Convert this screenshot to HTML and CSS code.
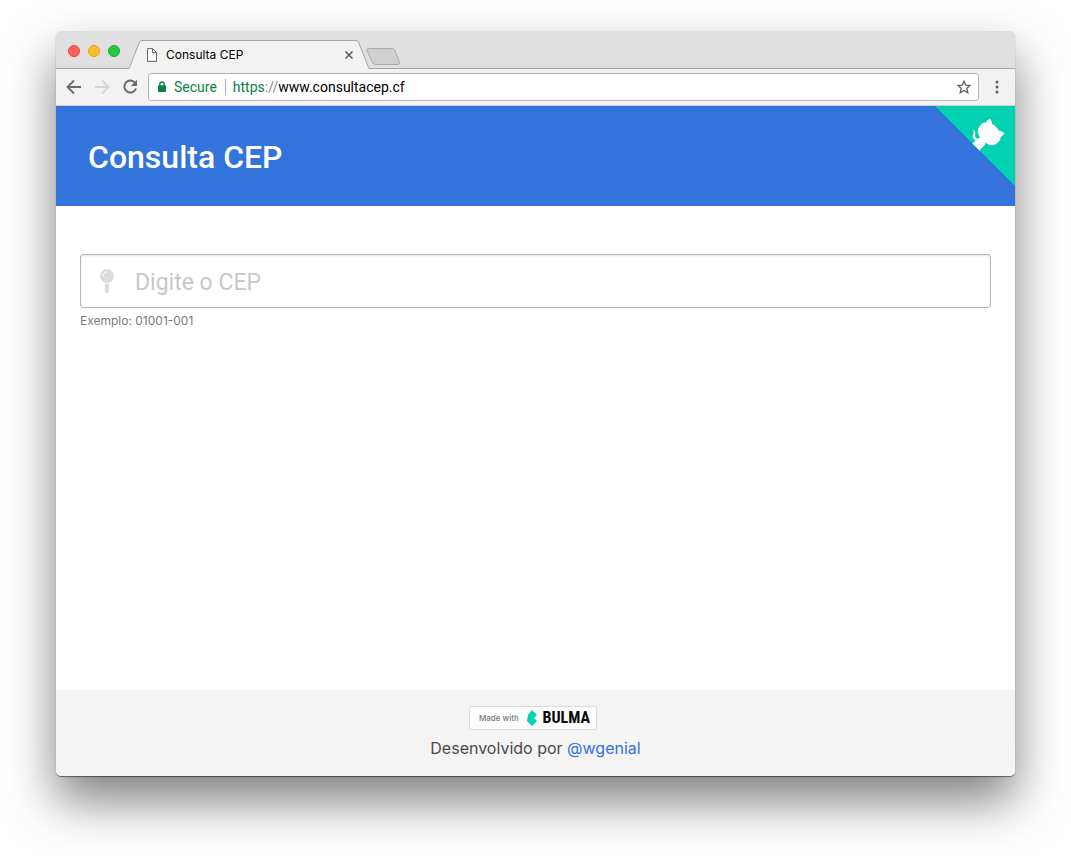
FILE: index.html
```html
<!DOCTYPE html>
<html lang="pt-BR">
<head>
<meta charset="utf-8">
<title>Consulta CEP</title>
<link rel="stylesheet" href="styles.css">
</head>
<body>
<div class="window">
  <div class="tabstrip">
    <div class="lights">
      <button class="light close" aria-label="Fechar"></button>
      <button class="light minimize" aria-label="Minimizar"></button>
      <button class="light maximize" aria-label="Maximizar"></button>
    </div>
    <div class="tab">
      <svg class="tab-shape" viewBox="0 0 242 29" preserveAspectRatio="none" aria-hidden="true"><path d="M0 28.500L1 28.500L11.500 2Q12.200.500 14 .500H228Q229.800.500 230.500 2L241 28.500H242V29H0Z" fill="#f2f2f2"/><path d="M0 28.500L1 28.500L11.500 2Q12.200.500 14 .500H228Q229.800.500 230.500 2L241 28.500H242" fill="none" stroke="#a3a3a3"/></svg>
      <svg class="page-icon" viewBox="0 0 12 14" aria-hidden="true"><path d="M1.500.600H6.500L10.500 4.600V13.400H1.500ZM6.500.600V4.600H10.500" fill="#fafafa" stroke="#666"/></svg>
      <span class="tab-title">Consulta CEP</span>
      <button class="tab-close" aria-label="Fechar aba"><svg viewBox="0 0 8 8"><path d="M.500.500L7.500 7.500M7.500.500L.500 7.500" stroke="#5a5a5a" stroke-width="1.500"/></svg></button>
    </div>
    <button class="new-tab" aria-label="Nova aba"><svg viewBox="0 0 34 17"><path d="M3 .500H26Q28 .500 28.700 2L33.300 14Q34 16.500 32 16.500H9.500Q7.500 16.500 6.800 15L1 2.500Q.500.500 3 .500Z" fill="#d0d0d0" stroke="#a9a9a9"/></svg></button>
  </div>
  <div class="toolbar">
    <button class="nav" aria-label="Voltar"><svg viewBox="0 0 16 16"><path d="M15 8H2M8 1.500L1.500 8L8 14.500" fill="none" stroke="#6a6a6a" stroke-width="1.800"/></svg></button>
    <button class="nav" aria-label="Avançar"><svg viewBox="0 0 16 16"><path d="M1 8H14M8 1.500L14.500 8L8 14.500" fill="none" stroke="#d6d6d6" stroke-width="1.800"/></svg></button>
    <button class="nav" aria-label="Recarregar"><svg viewBox="0 0 16 16"><path d="M13.300 4.200A6 6 0 1 0 14 9.500" fill="none" stroke="#6a6a6a" stroke-width="2"/><path d="M15 .800V7H8.800Z" fill="#6a6a6a"/></svg></button>
    <div class="address">
      <svg class="lock" viewBox="0 0 8 11" aria-hidden="true"><path d="M1.800 5V3.200A2.200 2.200 0 0 1 6.200 3.200V5" fill="none" stroke="#0b8043" stroke-width="1.300"/><rect y="4.200" width="8" height="6.800" rx=".8" fill="#0b8043"/></svg>
      <span class="secure">Secure</span>
      <span class="url"><span class="scheme">https</span><span class="slashes">://</span>www.consultacep.cf</span>
      <button class="star" aria-label="Favorito"><svg viewBox="0 0 14 14"><path d="M7 1.200L8.700 5.100L13 5.500L9.800 8.300L10.800 12.700L7 10.400L3.200 12.700L4.200 8.300L1 5.500L5.300 5.100Z" fill="none" stroke="#5f5f5f" stroke-width="1.300"/></svg></button>
    </div>
    <button class="menu" aria-label="Menu"><svg viewBox="0 0 4 14"><g fill="#5f5f5f"><circle cx="2" cy="2" r="1.500"/><circle cx="2" cy="7" r="1.500"/><circle cx="2" cy="12" r="1.500"/></g></svg></button>
  </div>
  <header class="hero">
    <h1 class="title">Consulta CEP</h1>
    <a class="corner" href="#" aria-label="GitHub"><svg viewBox="0 0 250 250"><path d="M0 0L250 250V0Z" fill="#00d1b2"/><path d="M128.300 109C113.800 99.700 119 89.600 119 89.600C122 82.700 120.500 78.600 120.500 78.600C119.200 72 123.400 76.300 123.400 76.300C127.300 80.900 125.500 87.300 125.500 87.300C122.900 97.600 130.600 101.900 134.400 103.200" fill="#fff"/><path d="M115 115C114.900 115.100 118.700 116.500 119.800 115.400L133.700 101.600C136.900 99.200 139.900 98.400 142.200 98.600C133.800 88 127.500 74.400 143.800 58C148.500 53.400 154 51.200 159.700 51C160.300 49.400 163.200 43.600 171.400 40.100C171.400 40.100 176.100 42.500 178.800 56.200C183.100 58.600 187.200 61.800 190.900 65.400C194.500 69 197.700 73.200 200.100 77.600C213.800 80.200 216.300 84.900 216.300 84.900C212.700 93.100 206.900 96 205.400 96.600C205.100 102.400 203 107.800 198.300 112.500C181.900 128.900 168.300 122.500 157.700 114.100C157.900 116.900 156.700 120.900 152.700 124.900L141 136.500C139.800 137.700 141.600 141.900 141.800 141.800Z" fill="#fff"/></svg></a>
  </header>
  <main class="content">
    <label class="field">
      <svg class="pin" viewBox="0 0 14 24" aria-hidden="true"><path d="M5 14.500Q7 15.200 9 14.500V22Q9 24 7 24Q5 24 5 22Z" fill="#dbdbdb"/><circle cx="7" cy="7" r="7" fill="#dbdbdb"/><path d="M2.800 7A4.300 4.300 0 0 1 7 2.700" fill="none" stroke="#fff" stroke-width="1" stroke-linecap="round"/></svg>
      <input class="cep" type="text" placeholder="Digite o CEP" aria-label="CEP">
    </label>
    <p class="help">Exemplo: 01001-001</p>
  </main>
  <footer class="footer">
    <a class="badge" href="#"><span class="made">Made with</span><svg class="bulma-mark" viewBox="0 0 10 16" aria-hidden="true"><path d="M0 11L1 5L5 0L10 5L7 8L10 11L5 16Z" fill="#00d1b2"/></svg><span class="bulma">BULMA</span></a>
    <p class="credit">Desenvolvido por <a href="#">@wgenial</a></p>
  </footer>
</div>
</body>
</html>
```
FILE: styles.css
```css
* { box-sizing: border-box; }
body {
  margin: 0;
  min-height: 100vh;
  display: flex;
  padding: 31px 56px 80px;
  background: #fff;
  font-family: Inter, "Open Sans", sans-serif;
  color: #4a4a4a;
}
button { padding: 0; border: 0; background: none; display: flex; align-items: center; justify-content: center; }
svg { display: block; }
h1, p { margin: 0; }
a { color: #3273dc; text-decoration: none; }

.window {
  flex: 1;
  min-width: 0;
  display: flex;
  flex-direction: column;
  background: #fff;
  border-radius: 5px;
  box-shadow: 0 1px 1px rgba(0, 0, 0, .5), 0 25px 50px rgba(0, 0, 0, .5);
}
.tabstrip {
  display: flex;
  align-items: flex-end;
  height: 38px;
  background: #e0e0e0;
  border-radius: 5px 5px 0 0;
  box-shadow: inset 0 -1px #a3a3a3;
}
.lights { display: flex; gap: 8px; width: 72px; padding: 0 0 12px 12px; }
.light { width: 12px; height: 12px; flex: none; border-radius: 50%; border: 1px solid; }
.close { background: #ff5f57; border-color: #e2463f; }
.minimize { background: #ffbd2e; border-color: #e1a116; }
.maximize { background: #28c940; border-color: #12ac28; }
.tab {
  position: relative;
  width: 242px;
  height: 29px;
  display: flex;
  align-items: center;
  padding: 0 17px 0 18px;
}
.tab-shape { position: absolute; inset: 0; width: 100%; height: 100%; }
.page-icon { position: relative; width: 12px; height: 14px; margin-right: 8px; }
.tab-title { position: relative; flex: 1; color: #000; font: 12px/16px Inter, sans-serif; }
.tab-close { position: relative; width: 8px; height: 8px; }
.tab-close svg { width: 8px; height: 8px; }
.new-tab { align-self: flex-end; padding-bottom: 4px; margin-left: -4px; }
.new-tab svg { width: 34px; height: 17px; }

.toolbar {
  display: flex;
  align-items: center;
  gap: 12px;
  height: 37px;
  padding: 0 16px 1px 10px;
  background: #f2f2f2;
  border-bottom: 1px solid #d0d0d0;
}
.nav svg { width: 16px; height: 16px; }
.address {
  flex: 1;
  display: flex;
  align-items: center;
  height: 28px;
  margin-right: 4px;
  margin-left: -2px;
  padding: 0 7px 0 9px;
  border: 1px solid #b5b5b5;
  border-radius: 3px;
  background: #fff;
  font-family: Roboto, sans-serif;
  font-size: 14px;
  line-height: 16px;
}
.lock { width: 8px; height: 11px; }
.secure { padding: 0 8px; border-right: 1px solid #aaa; color: #0b8043; }
.url { flex: 1; padding-left: 7px; color: #000; }
.scheme { color: #0b8043; }
.slashes { color: #888; }
.star svg { width: 14px; height: 14px; }
.menu svg { width: 4px; height: 14px; }

.hero { position: relative; padding: 33px 32px 31px; background: #3273dc; }
.title { color: #fff; font: 500 32px/36px Roboto, sans-serif; }
.corner { position: absolute; top: 0; right: 0; }
.corner svg { width: 80px; height: 80px; }

.content { flex: 1; padding: 48px 24px; }
.field { position: relative; display: block; }
.pin { position: absolute; left: 20px; top: 15px; width: 14px; height: 24px; }
.cep {
  display: block;
  width: 100%;
  height: 54px;
  padding: 2px 16px 0 54px;
  border: 1px solid #b5b5b5;
  border-radius: 3px;
  box-shadow: inset 0 1px 2px rgba(10, 10, 10, .1);
  font: 23px/36px Roboto, sans-serif;
  color: #363636;
}
.cep::placeholder { color: #c8c8c8; opacity: 1; }
.help { margin-top: 4px; font-size: 12px; line-height: 18px; color: #7a7a7a; }

.footer {
  display: flex;
  flex-direction: column;
  align-items: center;
  gap: 6px;
  padding: 16px 24px;
  background: #f4f4f4;
  border-radius: 0 0 5px 5px;
}
.badge {
  display: flex;
  align-items: center;
  width: 128px;
  height: 24px;
  padding: 0 6px 0 9px;
  margin-right: 5px;
  border: 1px solid #dbdbdb;
  border-radius: 2px;
  background: linear-gradient(#fff, #fafafa);
}
.made { flex: 1; font-size: 8px; font-weight: 500; line-height: 12px; color: #7a7a7a; }
.bulma-mark { width: 10px; height: 16px; margin-right: 5px; }
.bulma { color: #0a0a0a; font: bold 16px/20px "Liberation Sans Narrow", "Roboto Condensed", "DejaVu Sans Condensed", sans-serif; }
.credit { font-size: 16px; line-height: 24px; }
```
